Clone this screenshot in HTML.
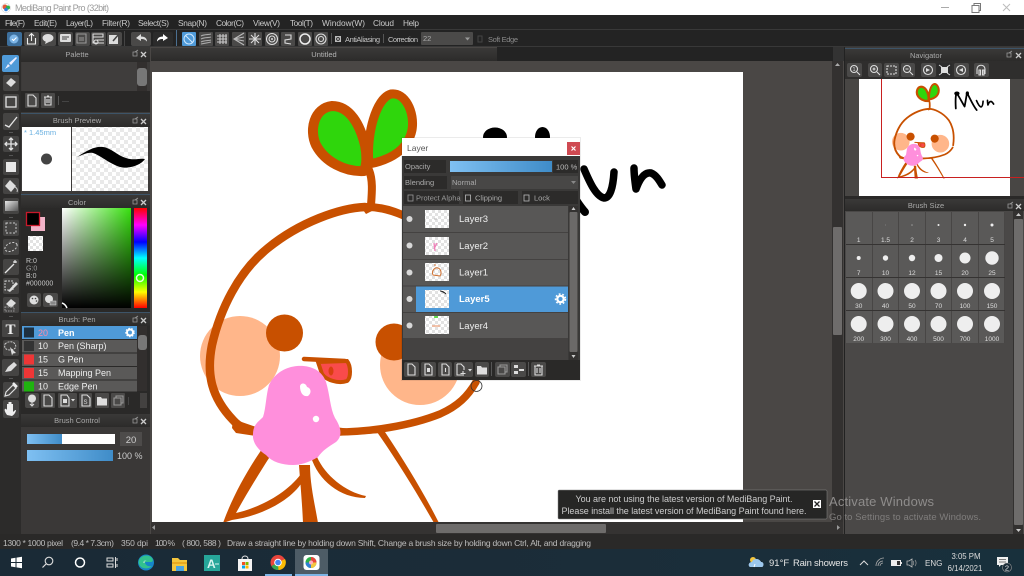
<!DOCTYPE html>
<html lang="en">
<head>
<meta charset="utf-8">
<title>MediBang Paint Pro</title>
<style>
html,body{margin:0;padding:0;background:#3c3a39;width:1024px;height:576px;overflow:hidden}
svg{display:block;position:absolute;left:0;top:0}
text{font-family:"Liberation Sans",sans-serif;font-size:8.5px;fill:#c4c4c4}
.c{text-anchor:middle}
.h{fill:#a8a8a8;font-size:7.5px}
.m{font-size:8.3px;fill:#c9c9c9}
.b{fill:#4a4948}
.i{fill:none;stroke:#ddd;stroke-width:1.1}
.f{fill:#ddd}
.t{fill:#454443}
.ti{fill:none;stroke:#e4e4e4;stroke-width:1.3}
.hd{fill:url(#hdr)}
.hl{fill:#3d5468}
.w{fill:#fff;font-size:9px}
.s{fill:#ddd;font-size:6.5px}
</style>
</head>
<body>
<svg width="1024" height="576" viewBox="0 0 1024 576" xmlns="http://www.w3.org/2000/svg">
<defs>
<pattern id="ck" width="8" height="8" patternUnits="userSpaceOnUse"><rect width="8" height="8" fill="#fff"/><rect width="4" height="4" fill="#e9e9e9"/><rect x="4" y="4" width="4" height="4" fill="#e9e9e9"/></pattern>
<pattern id="ck2" width="6" height="6" patternUnits="userSpaceOnUse"><rect width="6" height="6" fill="#fff"/><rect width="3" height="3" fill="#e2e2e2"/><rect x="3" y="3" width="3" height="3" fill="#e2e2e2"/></pattern>
<linearGradient id="hdr" x1="0" y1="0" x2="0" y2="1"><stop offset="0" stop-color="#3a3938"/><stop offset="1" stop-color="#2c2b2a"/></linearGradient>
<linearGradient id="blue" x1="0" y1="0" x2="1" y2="0"><stop offset="0" stop-color="#7fc0f2"/><stop offset="1" stop-color="#3f8cc8"/></linearGradient>
<linearGradient id="gw" x1="0" y1="0" x2="1" y2="0"><stop offset="0" stop-color="#fff"/><stop offset="1" stop-color="#38e010"/></linearGradient>
<linearGradient id="gk" x1="0" y1="0" x2="0" y2="1"><stop offset="0" stop-color="#000" stop-opacity="0"/><stop offset="1" stop-color="#000"/></linearGradient>
<linearGradient id="hue" x1="0" y1="0" x2="0" y2="1"><stop offset="0" stop-color="#f00"/><stop offset=".17" stop-color="#f0f"/><stop offset=".34" stop-color="#00f"/><stop offset=".5" stop-color="#0ff"/><stop offset=".67" stop-color="#0f0"/><stop offset=".84" stop-color="#ff0"/><stop offset="1" stop-color="#f00"/></linearGradient>
<linearGradient id="grad" x1="0" y1="0" x2="1" y2="1"><stop offset="0" stop-color="#e8e8e8"/><stop offset="1" stop-color="#555"/></linearGradient>
<linearGradient id="tb" x1="0" y1="0" x2="1" y2="0"><stop offset="0" stop-color="#1a2a36"/><stop offset=".6" stop-color="#1b2d39"/><stop offset="1" stop-color="#18303c"/></linearGradient>

<g id="drawing">
  <circle cx="240" cy="356" r="40" fill="#ffb68a"/>
  <circle cx="420" cy="365" r="40" fill="#ffb68a"/>
  <g fill="none" stroke="#c85000" stroke-linecap="round" stroke-linejoin="round">
    <path d="M364 171 C345 172 325 162 316 145 C309 130 314 108 332 106 C350 106 360 125 365 145 C367 155 367 165 364 171Z" fill="#2fd60c" stroke-width="10"/>
    <path d="M369 164 C366 135 376 98 391 94 C405 92 415 112 412 130 C408 150 390 160 369 164Z" fill="#2fd60c" stroke-width="9"/>
    <path d="M369 170 C373 180 372 192 371 205" stroke-width="8"/>
    <path d="M365 207 C340 208 300 222 268 248 C238 272 220 310 212 345 C206 375 212 398 233 420 C240 428 248 430 256 431" stroke-width="8.500"/>
    <path d="M365 207 C390 206 430 222 458 258 C478 288 484 330 478 372" stroke-width="8"/>
    <path d="M335 432 C370 432 410 426 440 414 C458 406 468 396 476 382" stroke-width="7.500"/>
    <path d="M304 359 L345 361" stroke-width="4.500"/>
  </g>
  <path d="M318 362 L347 361 C351 366 351 378 347 381 C338 384 326 380 322 374 Z" fill="#f94b4b" stroke="#c85000" stroke-width="4"/>
  <ellipse cx="331" cy="371" rx="2.500" ry="4.500" fill="#d84010"/>
  <circle cx="284.500" cy="333" r="18.500" fill="#c85000"/>
  <circle cx="394" cy="342" r="18.500" fill="#c85000"/>
  <g fill="#c85000">
    <path d="M377 432 L385 432 C405 462 425 495 439 523 L434 523 C418 495 398 462 377 432Z"/>
    <path d="M262 449 L271 455 C258 475 246 495 236 513 C258 508 285 495 301 474 L306 474 C298 498 262 516 232 520 L223 523 C232 498 246 472 262 449Z"/>
    <path d="M299 465 L310 465 C310 485 315 505 318 523 L303 523 C302 500 300 480 299 465Z"/>
    <path d="M311 457 L317 457 C325 475 345 492 366 496 L365 498 C340 498 318 480 311 457Z"/>
    <path d="M233 419 L256 427 L256 436 L236 433 L232 428Z"/>
    <path d="M335 427 L382 433 L335 436Z"/>
    <path d="M360 206 L372 204 L378 208 L366 214Z"/>
  </g>
  <path d="M297 366 C310 365 322 370 326 382 C330 395 330 408 335 418 C341 427 343 436 336 442 C328 447 322 451 318 457 C308 463 300 465 293 465 C282 465 272 462 266 455 C258 450 252 442 253 434 C253 425 258 422 263 417 C266 408 266 395 269 385 C274 374 285 367 297 366Z" fill="#ff8fdc"/>
  <path d="M300 386 C301 382 306 383 307 387 C311 388 312 393 308 396 C304 397 300 394 300 386Z" fill="#fff"/>
  <circle cx="316" cy="419" r="3.200" fill="#fff"/>
  <g fill="none" stroke="#000" stroke-width="8" stroke-linecap="round" stroke-linejoin="round">
    <path d="M490 205 C488 170 488 150 493 134 C505 150 520 180 530 196 C535 170 538 150 541 134 C555 160 570 195 585 212"/>
    <path d="M584 169 C590 183 596 196 604 198 C610 198 613 188 614 172" stroke-width="7.500"/>
    <path d="M634 168 C634 175 635 182 636 189 C640 178 645 172 651 173 C656 175 659 180 662 185" stroke-width="7.500"/>
  </g>
  <ellipse cx="495" cy="137" rx="12" ry="9.500" fill="#000"/>
  <ellipse cx="542.500" cy="137" rx="7.500" ry="10" fill="#000"/>
</g>
</defs>

<!-- backgrounds -->
<rect width="1024" height="576" fill="#3c3a39"/>
<rect width="1024" height="15" fill="#fff"/>
<rect y="15" width="1024" height="32" fill="#232323"/>
<rect y="29" width="1024" height="1" fill="#383838"/>
<rect y="46" width="1024" height="1" fill="#383838"/>

<!-- title bar -->
<circle cx="6" cy="8" r="4.500" fill="#fff" stroke="#ccc" stroke-width=".5"/>
<circle cx="5" cy="7" r="2.500" fill="#e35a3a"/><circle cx="8" cy="7.500" r="2" fill="#2db34a"/><circle cx="6" cy="9.500" r="1.800" fill="#2f7fd8"/>
<text x="15" y="11" style="font-size:9px;fill:#9a9a9a" textLength="94">MediBang Paint Pro (32bit)</text>
<rect x="941" y="7" width="8" height="1" fill="#aaa"/>
<path d="M972 5.500h7v7h-7z M974 5.500v-2h6.500v7h-1.500" fill="none" stroke="#777" stroke-width="1"/>
<path d="M1003 4l7 7M1010 4l-7 7" stroke="#bbb" stroke-width="1"/>

<!-- menu -->
<g class="m">
<text class="m" x="5" y="26" textLength="20">File(F)</text>
<text class="m" x="34" y="26" textLength="23">Edit(E)</text>
<text class="m" x="66" y="26" textLength="27">Layer(L)</text>
<text class="m" x="102" y="26" textLength="28">Filter(R)</text>
<text class="m" x="138" y="26" textLength="31">Select(S)</text>
<text class="m" x="178" y="26" textLength="29">Snap(N)</text>
<text class="m" x="216" y="26" textLength="28">Color(C)</text>
<text class="m" x="253" y="26" textLength="27">View(V)</text>
<text class="m" x="290" y="26" textLength="23">Tool(T)</text>
<text class="m" x="322" y="26" textLength="43">Window(W)</text>
<text class="m" x="373" y="26" textLength="21">Cloud</text>
<text class="m" x="403" y="26" textLength="16">Help</text>
</g>

<!-- toolbar -->
<g>
<rect x="7" y="32" width="15" height="14" rx="2" fill="#3d6f9c"/><circle cx="14" cy="39" r="4.500" fill="#7db5e6"/><path d="M12 39l1.500 1.500 3-3" stroke="#fff" fill="none"/>
<rect x="24" y="32" width="15" height="14" rx="2" class="b"/><path d="M27.500 38v6h8v-6M31.500 41v-7M29 36l2.500-2.500 2.500 2.500" class="i" style="stroke:#eee"/>
<rect x="41" y="32" width="15" height="14" rx="2" class="b"/><ellipse cx="48" cy="38" rx="5.500" ry="4" class="f"/><path d="M46 41l-1 3 4-2" class="f"/>
<rect x="58" y="32" width="15" height="14" rx="2" class="b"/><rect x="60" y="34" width="11" height="8" rx="1" class="f"/><path d="M62 37h7M62 39h5" stroke="#444"/>
<rect x="75" y="32" width="15" height="14" rx="2" class="b"/><path d="M77 34h9v9h-9zM79 38h5M79 40h5" class="i" style="stroke:#999"/>
<rect x="91" y="32" width="15" height="14" rx="2" class="b"/><path d="M93 34h10v3h-10zM93 37v6h5M97 40h7M97 43h7" class="i"/><circle cx="96" cy="42" r="2" class="i"/>
<rect x="107" y="32" width="15" height="14" rx="2" class="b"/><path d="M109 35h9v9h-9z" class="f"/><path d="M113 41l6-7" stroke="#444" stroke-width="1.500"/>
<rect x="124" y="31" width="1" height="15" fill="#444"/>
<rect x="131" y="32" width="20" height="14" rx="2" class="b"/><path d="M136 38l5-4v2.500c4 0 6 2 6 5-2-2-3-2.500-6-2.500V41z" class="f"/>
<rect x="153" y="32" width="20" height="14" rx="2" fill="#2b2b2b"/><path d="M168 38l-5-4v2.500c-4 0-6 2-6 5 2-2 3-2.500 6-2.500V41z" fill="#fff"/>
<rect x="176" y="30" width="1" height="16" fill="#4b6f90"/>
<rect x="182" y="32" width="14" height="14" rx="1" fill="#4f9ad8"/><circle cx="189" cy="39" r="5" fill="none" stroke="#cfe8ff"/><path d="M185.500 35.500l7 7" stroke="#cfe8ff"/>
<rect x="199" y="32" width="14" height="14" rx="1" class="b"/><path d="M201 36c4-2 7-1 10-2M201 39c4-2 7-1 10-2M201 42c4-2 7-1 10-2M201 44c4-1 7-1 10-2" class="i" style="stroke:#aaa"/>
<rect x="215" y="32" width="14" height="14" rx="1" class="b"/><path d="M217 36h10M217 39h10M217 42h10M220 34v10M223 34v10M226 34v10" class="i" style="stroke:#ccc"/>
<rect x="232" y="32" width="14" height="14" rx="1" class="b"/><path d="M244 33l-10 6 10 6M244 37l-10 2 10 2" class="i" style="stroke:#bbb"/>
<rect x="248" y="32" width="14" height="14" rx="1" class="b"/><path d="M255 33v12M249 39h12M251 35l8 8M259 35l-8 8" class="i" style="stroke:#ddd"/>
<rect x="265" y="32" width="14" height="14" rx="1" class="b"/><circle cx="272" cy="39" r="5.500" class="i"/><circle cx="272" cy="39" r="3" class="i"/><circle cx="272" cy="39" r="1" class="f"/>
<rect x="281" y="32" width="14" height="14" rx="1" class="b"/><path d="M285 35h6v4l-6 1v3l6 1" class="i"/>
<rect x="298" y="32" width="14" height="14" rx="1" class="b"/><circle cx="305" cy="39" r="5" fill="none" stroke="#eee" stroke-width="1.500"/>
<rect x="314" y="32" width="14" height="14" rx="1" class="b"/><circle cx="321" cy="39" r="5" class="i"/><circle cx="321" cy="39" r="2.500" class="i"/>
<rect x="331" y="33" width="1" height="11" fill="#555"/>
<rect x="335.500" y="36.500" width="5" height="5" fill="#333" stroke="#bbb"/><path d="M336 37l4 4M340 37l-4 4" stroke="#bbb" stroke-width=".7"/>
<text x="345" y="42" textLength="35" style="font-size:7.500px">AntiAliasing</text>
<rect x="383" y="34" width="1" height="9" fill="#555"/>
<text x="388" y="42" textLength="30" style="font-size:7.500px">Correction</text>
<rect x="421" y="32" width="52" height="13" rx="1" fill="#4b4a49"/>
<text x="423" y="41" style="font-size:7.500px;fill:#aaa">22</text>
<path d="M465 37.500h5l-2.500 3z" fill="#999"/>
<rect x="478" y="36" width="4" height="6" fill="none" stroke="#444"/>
<text x="488" y="42" textLength="30" style="font-size:7.500px;fill:#8a8a8a">Soft Edge</text>
</g>

<!-- canvas area -->
<rect x="150" y="47" width="694" height="488" fill="#4a4745"/>
<rect x="151" y="48" width="346" height="13" fill="url(#hdr)"/>
<rect x="497" y="47" width="336" height="14" fill="#232323"/>
<rect x="833" y="47" width="12" height="14" fill="#333"/>
<text class="c" x="324" y="57" style="font-size:7.500px;fill:#b4b4b4">Untitled</text>
<rect x="152" y="72" width="591" height="450" fill="#fff"/>
<svg x="152" y="72" width="591" height="450" viewBox="152 72 591 450"><use href="#drawing"/></svg>

<!-- canvas scrollbars -->
<rect x="151" y="522" width="692" height="12" fill="#353332"/>
<rect x="436" y="524" width="170" height="9" rx="1" fill="#6e6c6b"/>
<path d="M155 525v5l-3-2.500z" fill="#999"/><path d="M837 525v5l3-2.500z" fill="#999"/>
<rect x="832" y="61" width="11" height="461" fill="#333130"/>
<rect x="833" y="227" width="9" height="108" rx="1" fill="#6e6c6b"/>
<path d="M835 66h5l-2.500-3z" fill="#aaa"/>

<!-- left tool column -->
<rect x="0" y="47" width="21" height="488" fill="#2c2b2a"/>
<rect x="2" y="55" width="17" height="17" rx="2" fill="#4f9ad8"/><path d="M5 69l3-5 2 2zM9 63l7-6 1 1-6 7z" fill="#eef"/>
<rect x="3" y="75" width="16" height="16" rx="2" class="t"/><path d="M6 83l5-5 5 4-5 5z" class="f"/>
<rect x="3" y="94" width="16" height="16" rx="2" class="t"/><rect x="6" y="97" width="10" height="10" class="ti"/>
<rect x="3" y="113" width="16" height="17" rx="2" class="t"/><path d="M5 125l4 2 8-10" class="ti" stroke-width="2"/>
<rect x="9" y="132" width="4" height="1" fill="#555"/>
<rect x="3" y="136" width="16" height="16" rx="2" class="t"/><path d="M11 138v12M5 144h12M9 140l2-2 2 2M9 148l2 2 2-2M7 142l-2 2 2 2M15 142l2 2-2 2" class="ti"/>
<rect x="9" y="155" width="4" height="1" fill="#555"/>
<rect x="3" y="159" width="16" height="16" rx="2" class="t"/><rect x="6" y="162" width="10" height="10" fill="#e8e8e8"/>
<rect x="3" y="178" width="16" height="16" rx="2" class="t"/><path d="M10 180l6 6-5 6-6-6z" class="f"/><path d="M15 187c2 1 3 3 2 5" stroke="#ccc" fill="none"/>
<rect x="3" y="198" width="16" height="16" rx="2" class="t"/><rect x="5" y="201" width="13" height="10" fill="url(#grad)"/>
<rect x="9" y="217" width="4" height="1" fill="#555"/>
<rect x="3" y="220" width="16" height="16" rx="2" class="t"/><rect x="6" y="223" width="10" height="10" fill="none" stroke="#ccc" stroke-dasharray="2 1.500"/>
<rect x="3" y="239" width="16" height="16" rx="2" class="t"/><ellipse cx="11" cy="247" rx="6.500" ry="4" transform="rotate(-25 11 247)" fill="none" stroke="#ccc" stroke-dasharray="2 1.500"/>
<rect x="3" y="259" width="16" height="16" rx="2" class="t"/><path d="M5 273l9-9" class="ti" stroke-width="2"/><path d="M15 260v3M13 262h4" stroke="#fff"/>
<rect x="3" y="278" width="16" height="16" rx="2" class="t"/><rect x="5" y="281" width="8" height="9" fill="none" stroke="#ccc" stroke-dasharray="2 1"/><path d="M8 291l8-9 2 2-8 8z" class="f"/>
<rect x="3" y="297" width="16" height="16" rx="2" class="t"/><path d="M6 304l5-5 5 4-5 5z" class="f"/><rect x="5" y="307" width="9" height="4" fill="none" stroke="#999" stroke-dasharray="1.500 1"/>
<rect x="9" y="316" width="4" height="1" fill="#555"/>
<rect x="2" y="320" width="17" height="17" rx="1" class="t"/>
<text class="c" x="10.500" y="334" style="font:bold 15px 'Liberation Serif',serif;fill:#eee">T</text>
<rect x="3" y="340" width="16" height="16" rx="2" class="t"/><path d="M5 344c3-3 8-3 10 0s0 6-5 6-6-3-5-6z" fill="none" stroke="#ccc" stroke-dasharray="2 1"/><path d="M10 347l6 6-3 .5-1 2z" class="f"/>
<rect x="2" y="359" width="17" height="17" rx="2" class="t"/><path d="M5 372l3-5 6-5 3 3-6 6z" class="f"/>
<rect x="9" y="378" width="4" height="1" fill="#555"/>
<rect x="3" y="382" width="16" height="16" rx="2" class="t"/><path d="M5 396l1-4 7-7 3 3-7 7z" fill="none" stroke="#ddd" stroke-width="1.200"/><path d="M13 383l4 4" stroke="#eee" stroke-width="2.500"/>
<rect x="3" y="400" width="16" height="18" rx="2" class="t"/><path d="M7 415c-2-3-3-5-2-6s2 1 2 1v-6h1.500v5-7h1.500v7-7h1.500v7-5h1.500v8c1-1 2-2 3-2 0 2-2 5-4 6z" fill="#eee"/>

<!-- Palette -->
<rect x="21" y="47" width="129" height="15" class="hd"/>
<text class="c h" x="77" y="57">Palette</text>
<path d="M133 52h4v4h-4zM135 52l3-2" stroke="#999" fill="none" stroke-width=".8"/>
<path d="M141 52l5 5M146 52l-5 5" stroke="#ccc" stroke-width="1.300"/>
<rect x="22" y="62" width="115" height="29" fill="#3f3d3c"/>
<rect x="137" y="62" width="10" height="29" fill="#322f2e"/>
<rect x="137" y="68" width="10" height="18" rx="3" fill="#777"/>
<rect x="21" y="91" width="129" height="21" fill="#292827"/>
<rect x="25" y="93" width="14" height="15" rx="1" class="b"/><path d="M28 95h5l3 3v8h-8z" class="i"/>
<rect x="41" y="93" width="14" height="15" rx="1" class="b"/><path d="M44 97h8M45 97v8h6v-8M47 96h2M47 99v4M49 99v4" class="i"/>
<rect x="58" y="96" width="1" height="9" fill="#555"/><rect x="62" y="101" width="7" height="1" fill="#444"/>
<!-- Brush Preview -->
<rect x="21" y="113" width="129" height="1" class="hl"/>
<rect x="21" y="114" width="129" height="13" class="hd"/>
<text class="c h" x="77" y="123">Brush Preview</text>
<path d="M133 119h4v4h-4zM135 119l3-2" stroke="#999" fill="none" stroke-width=".8"/>
<path d="M141 119l5 5M146 119l-5 5" stroke="#ccc" stroke-width="1.300"/>
<rect x="22" y="127" width="49" height="64" fill="#fff"/>
<rect x="72" y="127" width="76" height="64" fill="url(#ck)"/>
<text x="24" y="135" style="font-size:7.500px;fill:#6ab0e0">* 1.45mm</text>
<circle cx="46.500" cy="159" r="5.500" fill="#444"/>
<path d="M77 157 C88 150 95 146 103 147 C112 148 118 157 130 159 C136 160 141 158 145 159 C140 166 128 169 120 167 C108 163 100 155 93 153 C88 152 82 155 77 157Z" fill="#000"/>
<!-- Color -->
<rect x="21" y="194" width="129" height="1" class="hl"/>
<rect x="21" y="195" width="129" height="13" class="hd"/>
<text class="c h" x="77" y="205">Color</text>
<path d="M133 200h4v4h-4zM135 200l3-2" stroke="#999" fill="none" stroke-width=".8"/>
<path d="M141 200l5 5M146 200l-5 5" stroke="#ccc" stroke-width="1.300"/>
<rect x="21" y="208" width="129" height="105" fill="#2a2928"/>
<rect x="31" y="217" width="14" height="14" fill="#f2b3c8"/>
<rect x="26.500" y="212.500" width="13" height="13" fill="#000" stroke="#c8182a" stroke-width="1.300"/>
<rect x="28" y="236" width="15" height="15" fill="url(#ck2)"/>
<text x="26" y="263" style="font-size:7px">R:0</text>
<text x="26" y="270.500" style="font-size:7px;fill:#999">G:0</text>
<text x="26" y="278" style="font-size:7px">B:0</text>
<text x="26" y="285.500" style="font-size:7px">#000000</text>
<rect x="27" y="293" width="14" height="14" rx="2" class="b"/><circle cx="34" cy="300" r="4.500" class="f"/><circle cx="32.500" cy="298.500" r=".8" fill="#444"/><circle cx="35.500" cy="298.500" r=".8" fill="#444"/><circle cx="36.500" cy="301" r=".8" fill="#444"/>
<rect x="43" y="293" width="15" height="14" rx="2" class="b"/><circle cx="49" cy="299" r="4" class="f"/><rect x="50" y="301" width="6" height="4" fill="#888" stroke="#ddd" stroke-width=".5"/>
<rect x="62" y="208" width="69" height="100" fill="url(#gw)"/>
<rect x="62" y="208" width="69" height="100" fill="url(#gk)"/>
<path d="M62 303c3 1 4 3 5 5" stroke="#fff" stroke-width="1.500" fill="none"/>
<rect x="134" y="208" width="13" height="100" fill="url(#hue)"/>
<circle cx="140" cy="278" r="3.500" fill="none" stroke="#e8ffe0" stroke-width="1.500"/>
<!-- Brush: Pen -->
<rect x="21" y="312" width="129" height="1" class="hl"/>
<rect x="21" y="313" width="129" height="13" class="hd"/>
<text class="c h" x="77" y="322">Brush: Pen</text>
<path d="M133 318h4v4h-4zM135 318l3-2" stroke="#999" fill="none" stroke-width=".8"/>
<path d="M141 318l5 5M146 318l-5 5" stroke="#ccc" stroke-width="1.300"/>
<rect x="21" y="326" width="129" height="89" fill="#2a2928"/>
<rect x="22" y="326" width="115" height="13" fill="#4f9ad8"/>
<rect x="22" y="340" width="115" height="12.500" fill="#5a5958"/>
<rect x="22" y="353.500" width="115" height="12.500" fill="#5a5958"/>
<rect x="22" y="367" width="115" height="12.500" fill="#5a5958"/>
<rect x="22" y="380.500" width="115" height="11" fill="#5a5958"/>
<rect x="24" y="327.500" width="10" height="10" fill="#1e3040"/>
<rect x="24" y="341" width="10" height="10" fill="#333"/>
<rect x="24" y="354.500" width="10" height="10" fill="#ee3636"/>
<rect x="24" y="368" width="10" height="10" fill="#ee3636"/>
<rect x="24" y="381.500" width="10" height="10" fill="#1fb30f"/>
<text x="38" y="336" style="font-size:9px;fill:#ff8aa8">20</text>
<text x="38" y="349" style="font-size:9px;fill:#eee">10</text>
<text x="38" y="362.500" style="font-size:9px;fill:#eee">15</text>
<text x="38" y="376" style="font-size:9px;fill:#eee">15</text>
<text x="38" y="389.500" style="font-size:9px;fill:#eee">10</text>
<text x="58" y="336" style="font:bold 9px 'Liberation Sans',sans-serif;fill:#fff">Pen</text>
<text x="58" y="349" style="font-size:9px;fill:#eee">Pen (Sharp)</text>
<text x="58" y="362.500" style="font-size:9px;fill:#eee">G Pen</text>
<text x="58" y="376" style="font-size:9px;fill:#eee">Mapping Pen</text>
<text x="58" y="389.500" style="font-size:9px;fill:#eee">Edge Pen</text>
<circle cx="130" cy="332.500" r="3" fill="none" stroke="#fff" stroke-width="2"/><circle cx="130" cy="332.500" r="4.200" fill="none" stroke="#fff" stroke-width="1.200" stroke-dasharray="1.500 1.500"/>
<rect x="137" y="326" width="10" height="65" fill="#322f2e"/>
<rect x="138" y="335" width="9" height="15" rx="3" fill="#777"/>
<rect x="25" y="393" width="14" height="15" rx="2" class="b"/><circle cx="32" cy="398.500" r="4" class="f"/><path d="M32 400v6M30 404l2 2 2-2" stroke="#ddd" fill="none"/>
<rect x="41" y="393" width="14" height="15" rx="1" class="b"/><path d="M44 395h5l3 3v8h-8z" class="i"/>
<rect x="58" y="393" width="19" height="15" rx="1" class="b"/><path d="M61 395h6l2 3v8h-8z" class="i"/><rect x="63" y="399" width="4" height="4" class="f"/><path d="M71 399h4l-2 2.500z" class="f"/>
<rect x="79" y="393" width="13" height="15" rx="1" class="b"/><path d="M82 395h5l3 3v8h-8z" class="i"/><text class="c" x="85.500" y="404" style="font-size:6px;fill:#ddd">S</text>
<rect x="95" y="393" width="14" height="15" rx="1" class="b"/><path d="M97 397h4l1 1.500h5v7h-10z" class="f"/>
<rect x="111" y="393" width="14" height="15" rx="1" class="b"/><path d="M114 398h7v7h-7zM116 398v-2h7v7h-2" class="i" style="stroke:#999"/>
<rect x="128" y="397" width="1" height="8" fill="#444"/>
<rect x="140" y="393" width="7" height="15" fill="#434140"/>
<!-- Brush Control -->
<rect x="21" y="414" width="129" height="13" class="hd"/>
<text class="c h" x="77" y="423">Brush Control</text>
<path d="M133 419h4v4h-4zM135 419l3-2" stroke="#999" fill="none" stroke-width=".8"/>
<path d="M141 419l5 5M146 419l-5 5" stroke="#ccc" stroke-width="1.300"/>
<rect x="21" y="427" width="129" height="108" fill="#3a3837"/>
<rect x="27" y="434" width="88" height="10" fill="#fff"/>
<rect x="27" y="434" width="35" height="10" fill="url(#blue)"/>
<rect x="120" y="432" width="22" height="14" fill="#4d4b4a"/>
<text class="c" x="131" y="443" style="font-size:9.500px;fill:#ccc">20</text>
<rect x="27" y="450" width="86" height="11" fill="url(#blue)"/>
<text x="117" y="459" style="font-size:9px;fill:#ccc">100 %</text>

<!-- Right: Navigator -->
<rect x="844" y="47" width="180" height="488" fill="#3e3c3b"/>
<rect x="844" y="47" width="1" height="488" fill="#222"/>
<rect x="845" y="48" width="179" height="1" class="hl"/>
<rect x="845" y="49" width="179" height="12" class="hd"/>
<text class="c h" x="926" y="58">Navigator</text>
<path d="M1007 53h4v4h-4zM1009 53l3-2" stroke="#999" fill="none" stroke-width=".8"/>
<path d="M1016 53l5 5M1021 53l-5 5" stroke="#ccc" stroke-width="1.300"/>
<rect x="845" y="61" width="179" height="18" fill="#2f2e2d"/>
<rect x="847" y="63" width="15" height="14" rx="2" class="b"/><circle cx="854" cy="69" r="3.500" class="i"/><path d="M857 72l3 3" class="i"/><text class="c" x="854" y="71" style="font-size:5px;fill:#ddd">1</text>
<rect x="868" y="63" width="14" height="14" rx="2" class="b"/><circle cx="874" cy="69" r="3.500" class="i"/><path d="M877 72l3 3M872.500 69h3M874 67.500v3" class="i"/>
<rect x="884" y="63" width="15" height="14" rx="2" class="b"/><rect x="887" y="66" width="9" height="8" class="i" stroke-dasharray="2 1"/>
<rect x="901" y="63" width="14" height="14" rx="2" class="b"/><circle cx="907" cy="69" r="3.500" class="i"/><path d="M910 72l3 3M905.500 69h3" class="i"/>
<rect x="921" y="63" width="15" height="14" rx="2" class="b"/><circle cx="928" cy="70" r="4.500" class="i" stroke-width="1.500"/><path d="M926 68l4 2-4 2z" class="f"/>
<rect x="937" y="63" width="15" height="14" rx="2" fill="#2b2b2b"/><rect x="941" y="67" width="7" height="6" class="f"/><path d="M939 65l3 2M950 65l-3 2M939 75l3-2M950 75l-3-2" stroke="#ddd"/>
<rect x="954" y="63" width="15" height="14" rx="2" class="b"/><circle cx="961" cy="70" r="4.500" class="i" stroke-width="1.500"/><path d="M963 68l-4 2 4 2z" class="f"/>
<rect x="974" y="63" width="15" height="14" rx="2" class="b"/><path d="M977 74v-5c0-5 8-5 8 0v5M979 70h1.500v5H979zM982.500 70h1.500v5h-1.500z" class="i"/>
<rect x="845" y="79" width="179" height="117" fill="#484644"/>
<rect x="859" y="79" width="151" height="117" fill="#fff"/>
<svg x="859" y="79" width="151" height="117" viewBox="859 79 151 117">
  <g transform="translate(848 63.4) scale(.22)"><use href="#drawing"/></g>
</svg>
<path d="M881.500 79V177.500H1024" fill="none" stroke="#c82020" stroke-width="1"/>
<rect x="845" y="196" width="179" height="3" fill="#2a2928"/>

<!-- Brush Size -->
<rect x="845" y="199" width="179" height="12" class="hd"/>
<text class="c h" x="926" y="208">Brush Size</text>
<path d="M1008 204h4v4h-4zM1010 204l3-2" stroke="#999" fill="none" stroke-width=".8"/>
<path d="M1016 204l5 5M1021 204l-5 5" stroke="#ccc" stroke-width="1.300"/>
<rect x="845" y="211" width="179" height="324" fill="#4a4847"/>
<g fill="#5a5958">
<rect x="846" y="212" width="159" height="131" fill="#353332"/>
<rect x="846" y="212" width="26" height="32"/><rect x="872.500" y="212" width="26" height="32"/><rect x="899" y="212" width="26" height="32"/><rect x="925.500" y="212" width="26" height="32"/><rect x="952" y="212" width="26" height="32"/><rect x="978.500" y="212" width="26" height="32"/>
<rect x="846" y="245" width="26" height="32"/><rect x="872.500" y="245" width="26" height="32"/><rect x="899" y="245" width="26" height="32"/><rect x="925.500" y="245" width="26" height="32"/><rect x="952" y="245" width="26" height="32"/><rect x="978.500" y="245" width="26" height="32"/>
<rect x="846" y="278" width="26" height="32"/><rect x="872.500" y="278" width="26" height="32"/><rect x="899" y="278" width="26" height="32"/><rect x="925.500" y="278" width="26" height="32"/><rect x="952" y="278" width="26" height="32"/><rect x="978.500" y="278" width="26" height="32"/>
<rect x="846" y="311" width="26" height="32"/><rect x="872.500" y="311" width="26" height="32"/><rect x="899" y="311" width="26" height="32"/><rect x="925.500" y="311" width="26" height="32"/><rect x="952" y="311" width="26" height="32"/><rect x="978.500" y="311" width="26" height="32"/>
</g>
<g fill="#eee">
<circle cx="885.500" cy="225" r=".5" fill="#888"/><circle cx="912" cy="225" r=".8" fill="#999"/><circle cx="938.500" cy="225" r="1"/><circle cx="965" cy="225" r="1.200"/><circle cx="992" cy="225" r="1.500"/>
<circle cx="858.700" cy="258" r="2"/><circle cx="885.500" cy="258" r="2.700"/><circle cx="912" cy="258" r="3.200"/><circle cx="938.500" cy="258" r="4"/><circle cx="965" cy="258" r="5.500"/><circle cx="992" cy="258" r="6.700"/>
<circle cx="858.700" cy="291" r="8"/><circle cx="885.500" cy="291" r="8"/><circle cx="912" cy="291" r="8"/><circle cx="938.500" cy="291" r="8"/><circle cx="965" cy="291" r="8"/><circle cx="992" cy="291" r="8"/>
<circle cx="858.700" cy="324" r="8"/><circle cx="885.500" cy="324" r="8"/><circle cx="912" cy="324" r="8"/><circle cx="938.500" cy="324" r="8"/><circle cx="965" cy="324" r="8"/><circle cx="992" cy="324" r="8"/>
</g>
<g>
<text class="c s" x="858.700" y="242">1</text><text class="c s" x="885.500" y="242">1.5</text><text class="c s" x="912" y="242">2</text><text class="c s" x="938.500" y="242">3</text><text class="c s" x="965" y="242">4</text><text class="c s" x="992" y="242">5</text>
<text class="c s" x="858.700" y="275">7</text><text class="c s" x="885.500" y="275">10</text><text class="c s" x="912" y="275">12</text><text class="c s" x="938.500" y="275">15</text><text class="c s" x="965" y="275">20</text><text class="c s" x="992" y="275">25</text>
<text class="c s" x="858.700" y="308">30</text><text class="c s" x="885.500" y="308">40</text><text class="c s" x="912" y="308">50</text><text class="c s" x="938.500" y="308">70</text><text class="c s" x="965" y="308">100</text><text class="c s" x="992" y="308">150</text>
<text class="c s" x="858.700" y="341">200</text><text class="c s" x="885.500" y="341">300</text><text class="c s" x="912" y="341">400</text><text class="c s" x="938.500" y="341">500</text><text class="c s" x="965" y="341">700</text><text class="c s" x="992" y="341">1000</text>
</g>
<rect x="1013" y="211" width="10" height="323" fill="#333130"/>
<rect x="1014" y="219" width="9" height="306" rx="1" fill="#6e6c6b"/>
<path d="M1016 216h5l-2.500-3z" fill="#ccc"/><path d="M1016 529h5l-2.500 3z" fill="#ccc"/>

<!-- Activate Windows -->
<text x="829" y="506" style="font-size:13px;fill:#8e8c8b" textLength="105">Activate Windows</text>
<text x="829" y="520" style="font-size:9.500px;fill:#7f7d7c" textLength="152">Go to Settings to activate Windows.</text>

<!-- Notification -->
<rect x="558" y="490" width="269" height="29" rx="1" fill="#262625" stroke="#8a8a8a" stroke-width=".5"/>
<text class="c" x="684" y="502" style="font-size:9px;fill:#ccc" textLength="217">You are not using the latest version of MediBang Paint.</text>
<text class="c" x="684" y="514" style="font-size:9px;fill:#ccc" textLength="245">Please install the latest version of MediBang Paint found here.</text>
<rect x="813" y="500" width="8" height="8" fill="#fff"/><path d="M814.500 501.500l5 5M819.500 501.500l-5 5" stroke="#222" stroke-width="1.300"/>

<!-- Layer panel -->
<rect x="401" y="137" width="180" height="244" fill="#000" opacity=".08"/>
<rect x="402" y="138" width="178" height="242" fill="#3a3938"/>
<rect x="402" y="138" width="178" height="18" fill="#fff"/>
<text x="407" y="151" style="font-size:8.500px;fill:#555">Layer</text>
<rect x="567" y="142" width="13" height="13" fill="#cf4a52"/><path d="M571.500 146.500l4 4M575.500 146.500l-4 4" stroke="#fff" stroke-width="1.200"/>
<rect x="404" y="160" width="42" height="13" fill="#2c2b2a"/>
<text x="405" y="169" style="font-size:7.500px;fill:#aaa">Opacity</text>
<rect x="450" y="161" width="102" height="11" fill="url(#blue)"/>
<rect x="553" y="160" width="25" height="13" fill="#2c2b2a"/>
<text x="556" y="169.500" style="font-size:7.500px;fill:#bbb">100 %</text>
<rect x="404" y="176" width="43" height="13" fill="#2c2b2a"/>
<text x="405" y="185" style="font-size:7.500px;fill:#aaa">Blending</text>
<rect x="451" y="176" width="127" height="13" fill="#484746"/>
<text x="452" y="185" style="font-size:7.500px;fill:#aaa">Normal</text>
<path d="M571 181h5l-2.500 3z" fill="#888"/>
<rect x="404" y="191" width="55" height="13" fill="#2c2b2a"/><rect x="463" y="191" width="55" height="13" fill="#2c2b2a"/><rect x="522" y="191" width="56" height="13" fill="#2c2b2a"/>
<rect x="408" y="195" width="5" height="6" fill="none" stroke="#999" stroke-width=".8"/><rect x="465.500" y="195" width="5" height="6" fill="none" stroke="#bbb" stroke-width=".8"/><rect x="524" y="195" width="5" height="6" fill="none" stroke="#bbb" stroke-width=".8"/>
<text x="416" y="200.500" style="font-size:7.500px;fill:#999">Protect Alpha</text>
<text x="475" y="200.500" style="font-size:7.500px;fill:#aaa">Clipping</text>
<text x="534" y="200.500" style="font-size:7.500px;fill:#aaa">Lock</text>
<rect x="403" y="206" width="165" height="154" fill="#444241"/>
<rect x="403" y="206" width="165" height="26" fill="#585756"/>
<rect x="403" y="233" width="165" height="26" fill="#585756"/>
<rect x="403" y="260" width="165" height="25.500" fill="#585756"/>
<rect x="403" y="286.500" width="165" height="25.500" fill="#585756"/>
<rect x="416" y="286.500" width="152" height="25.500" fill="#4f9ad8"/>
<rect x="403" y="313" width="165" height="25" fill="#585756"/>
<g fill="#d8d8d8">
<circle cx="409.500" cy="219" r="3"/><circle cx="409.500" cy="245.500" r="3"/><circle cx="409.500" cy="272.500" r="3"/><circle cx="409.500" cy="299" r="3"/><circle cx="409.500" cy="325.500" r="3"/>
</g>
<rect x="425" y="210" width="24" height="18" fill="url(#ck2)"/>
<rect x="425" y="237" width="24" height="18" fill="url(#ck2)"/>
<rect x="425" y="263" width="24" height="18" fill="url(#ck2)"/>
<rect x="425" y="290" width="24" height="18" fill="url(#ck2)"/>
<rect x="425" y="316" width="24" height="18" fill="url(#ck2)"/>
<path d="M434 219h3" stroke="#bbb"/>
<path d="M434 243l1 8M437 243l-3 6" stroke="#ef7fb8" stroke-width="1.300"/>
<path d="M433 275c-2-4 2-8 5-7 3 1 4 5 2 8z" fill="none" stroke="#d07030"/><path d="M435 266v-2" stroke="#d07030"/>
<path d="M440 291c2 0 4 1 6 3" stroke="#222"/>
<path d="M434 317h4" stroke="#3ad820" stroke-width="1.500"/><path d="M432 326h8" stroke="#f0b090" stroke-width="1.500"/>
<text x="459" y="222" style="font-size:9.500px;fill:#eee">Layer3</text>
<text x="459" y="249" style="font-size:9.500px;fill:#eee">Layer2</text>
<text x="459" y="275.500" style="font-size:9.500px;fill:#eee">Layer1</text>
<text x="459" y="302" style="font:bold 9.500px 'Liberation Sans',sans-serif;fill:#fff">Layer5</text>
<text x="459" y="329" style="font-size:9.500px;fill:#eee">Layer4</text>
<circle cx="560.500" cy="299" r="3.200" fill="none" stroke="#fff" stroke-width="2.200"/><circle cx="560.500" cy="299" r="5" fill="none" stroke="#fff" stroke-width="1.500" stroke-dasharray="1.800 1.800"/>
<rect x="569" y="206" width="9" height="154" fill="#343231"/>
<rect x="569.500" y="212" width="8" height="140" rx="1" fill="#6b6968"/>
<path d="M571.500 210h4l-2-3z" fill="#ccc"/><path d="M571.500 355h4l-2 3z" fill="#ccc"/>
<rect x="402" y="360" width="178" height="20" fill="#2a2928"/>
<rect x="404" y="362" width="15" height="15" rx="2" class="b"/><path d="M408 364h4l3 3v8h-7z" class="i"/>
<rect x="421" y="362" width="15" height="15" rx="2" class="b"/><path d="M425 364h4l3 3v8h-7z" class="i"/><rect x="427" y="368" width="3" height="4" class="f"/>
<rect x="438" y="362" width="14" height="15" rx="2" class="b"/><path d="M442 364h4l3 3v8h-7z" class="i"/><path d="M445.500 368v4" class="i"/>
<rect x="454" y="362" width="19" height="15" rx="2" class="b"/><path d="M457 364h4l3 3v3M457 364v11h5" class="i"/><path d="M463 371v5M460.500 373.500h5" class="i"/><path d="M468 369h4l-2 2.500z" class="f"/>
<rect x="475" y="362" width="14" height="15" rx="2" class="b"/><path d="M477 366h4l1 1.500h5v7h-10z" class="f"/>
<rect x="491" y="362" width="1" height="14" fill="#555"/>
<rect x="495" y="362" width="15" height="15" rx="2" class="b"/><path d="M498 367h7v7h-7zM500 367v-2h7v7h-2" class="i" style="stroke:#999"/>
<rect x="511" y="362" width="15" height="15" rx="2" class="b"/><path d="M514 365h4v3h-4zM514 371h4v3h-4zM519 369h5v2h-5z" class="f"/>
<rect x="528" y="362" width="1" height="14" fill="#555"/>
<rect x="531" y="362" width="15" height="15" rx="2" class="b"/><path d="M534 366h9M535 366v9h7v-9M537 365h3M537 368v5M540 368v5" class="i"/>

<!-- brush cursor -->
<circle cx="476.500" cy="386" r="5.500" fill="none" stroke="#333" stroke-width=".8"/>

<!-- status bar -->
<rect y="534" width="1024" height="15" fill="#2a2928"/>
<text x="3" y="546" style="font-size:8.500px;fill:#bdbdbd" textLength="60">1300 * 1000 pixel</text>
<text x="71" y="546" style="font-size:8.500px;fill:#bdbdbd" textLength="43">(9.4 * 7.3cm)</text>
<text x="121" y="546" style="font-size:8.500px;fill:#bdbdbd" textLength="27">350 dpi</text>
<text x="155" y="546" style="font-size:8.500px;fill:#bdbdbd" textLength="20">100 %</text>
<text x="182" y="546" style="font-size:8.500px;fill:#bdbdbd" textLength="39">( 800, 588 )</text>
<text x="227" y="546" style="font-size:8.500px;fill:#bdbdbd" textLength="364">Draw a straight line by holding down Shift, Change a brush size by holding down Ctrl, Alt, and dragging</text>

<!-- taskbar -->
<rect y="549" width="1024" height="27" fill="url(#tb)"/>
<path d="M11 558.500l4.500-.7V562H11zM16.500 557.600l5.500-.8V562h-5.500zM11 563h4.500v4.200l-4.500-.7zM16.500 563H22v5.200l-5.500-.8z" fill="#fff"/>
<circle cx="49" cy="561" r="3.800" fill="none" stroke="#ddd" stroke-width="1.100"/><path d="M46 564l-3.500 3.500" stroke="#ddd" stroke-width="1.200"/>
<circle cx="80" cy="562.500" r="4.500" fill="none" stroke="#fff" stroke-width="1.500"/>
<path d="M107 558h6v3h-6zM107 564h6v3h-6zM115.500 557v11" fill="none" stroke="#ddd" stroke-width="1"/><path d="M117 558v3M117 564v3" stroke="#ddd"/>
<circle cx="146" cy="562.500" r="8" fill="#1685c9"/><path d="M139 560c2-5 10-6 13-2 1.500 2 1 4-1 4h-6c0 3 3 5 7 4-3 3-8 3-11 1-2-2-3-4-2-7z" fill="#32c28e"/><path d="M143 563c0-2 2-3 4-3-1 0-2 1-2 3z" fill="#fff" opacity=".4"/>
<path d="M172 558h6l2 2h7v11h-15z" fill="#f4c63d"/><rect x="172" y="562" width="15" height="2" fill="#e9a920"/><rect x="176" y="566" width="8" height="5" fill="#4aa3df"/>
<rect x="204" y="555" width="16" height="16" fill="#26a69a"/><text x="207" y="568" style="font:bold 12px 'Liberation Sans',sans-serif;fill:#d8f5f0">A</text><path d="M215 564h4" stroke="#d8f5f0"/>
<path d="M238 559h14v12h-14z" fill="#f4f4f4"/><path d="M242 559c0-4 6-4 6 0" stroke="#eee" fill="none"/><rect x="242" y="562" width="3" height="3" fill="#f25022"/><rect x="245.500" y="562" width="3" height="3" fill="#7fba00"/><rect x="242" y="565.500" width="3" height="3" fill="#00a4ef"/><rect x="245.500" y="565.500" width="3" height="3" fill="#ffb900"/>
<rect x="265" y="574" width="27" height="2" fill="#7db5e6"/>
<circle cx="278" cy="562.500" r="7.500" fill="#e8453c"/><path d="M278 562.500L271.500 566A7.500 7.500 0 0 0 278.500 570z" fill="#34a853"/><path d="M278 562.500L278.500 570A7.500 7.500 0 0 0 285 559z" fill="#fbbc05"/><circle cx="278" cy="562.500" r="3.300" fill="#4285f4" stroke="#fff"/>
<rect x="295" y="549" width="33" height="27" fill="#4d5c66"/>
<rect x="295" y="574" width="33" height="2" fill="#7db5e6"/>
<rect x="303.500" y="555" width="16" height="15" rx="3" fill="#fff"/>
<circle cx="311" cy="562.500" r="5.500" fill="#2db34a"/><path d="M311 557a5.500 5.500 0 0 1 5.500 5.500h-5.500z" fill="#e8453c"/><path d="M311 562.500h5.500a5.500 5.500 0 0 1-5.500 5.500z" fill="#f4c63d"/><path d="M311 562.500v5.500a5.500 5.500 0 0 1-5.500-5.500z" fill="#2f7fd8"/><circle cx="311" cy="562.500" r="2" fill="#ffb0c0"/>

<path d="M749 566c-1-3 2-4 3-4 1-4 7-4 9 0 3 0 3 4 1 5h-12z" fill="#e8f1fa"/><circle cx="753" cy="560" r="3" fill="#f4c63d"/><path d="M749 566c-1-3 2-4 3-4 1-4 7-4 9 0 3 0 3 4 1 5h-12z" fill="#9cc8ee"/><path d="M755 564l-1 3" stroke="#fff"/>
<text x="769" y="566" style="font-size:9.500px;fill:#e4e4e4">91°F</text>
<text x="793" y="566" style="font-size:9.500px;fill:#e4e4e4" textLength="55">Rain showers</text>
<path d="M860 565l4-4 4 4" fill="none" stroke="#ddd"/>
<path d="M876 566a8 8 0 0 1 8-8M878 566a5 5 0 0 1 5-5M880 566a3 3 0 0 1 3-3" fill="none" stroke="#aaa" stroke-width=".8"/>
<rect x="891" y="560" width="10" height="6" fill="#eee"/><rect x="901" y="562" width="1" height="2" fill="#ddd"/><rect x="897" y="561" width="3" height="4" fill="#333"/>
<path d="M907 561h2l3-2v8l-3-2h-2z" fill="none" stroke="#bbb" stroke-width=".8"/><path d="M913 561c1 1 1 3 0 4M915 560c1.500 2 1.500 4 0 6" fill="none" stroke="#999" stroke-width=".7"/>
<text x="925" y="566" style="font-size:8px;fill:#ddd">ENG</text>
<text class="c" x="966" y="559" style="font-size:7.800px;fill:#ddd">3:05 PM</text>
<text class="c" x="965" y="571" style="font-size:7.800px;fill:#ddd">6/14/2021</text>
<path d="M997 557h11v8h-7l-2 2v-2h-2z" fill="#f0f0f0"/><path d="M999 559.500h7M999 562h7" stroke="#555" stroke-width=".8"/>
<circle cx="1007" cy="567.500" r="4.500" fill="#1b2d39" stroke="#999" stroke-width=".6"/>
<text class="c" x="1007" y="570.500" style="font-size:7.500px;fill:#eee">2</text>
</svg>
</body>
</html>
